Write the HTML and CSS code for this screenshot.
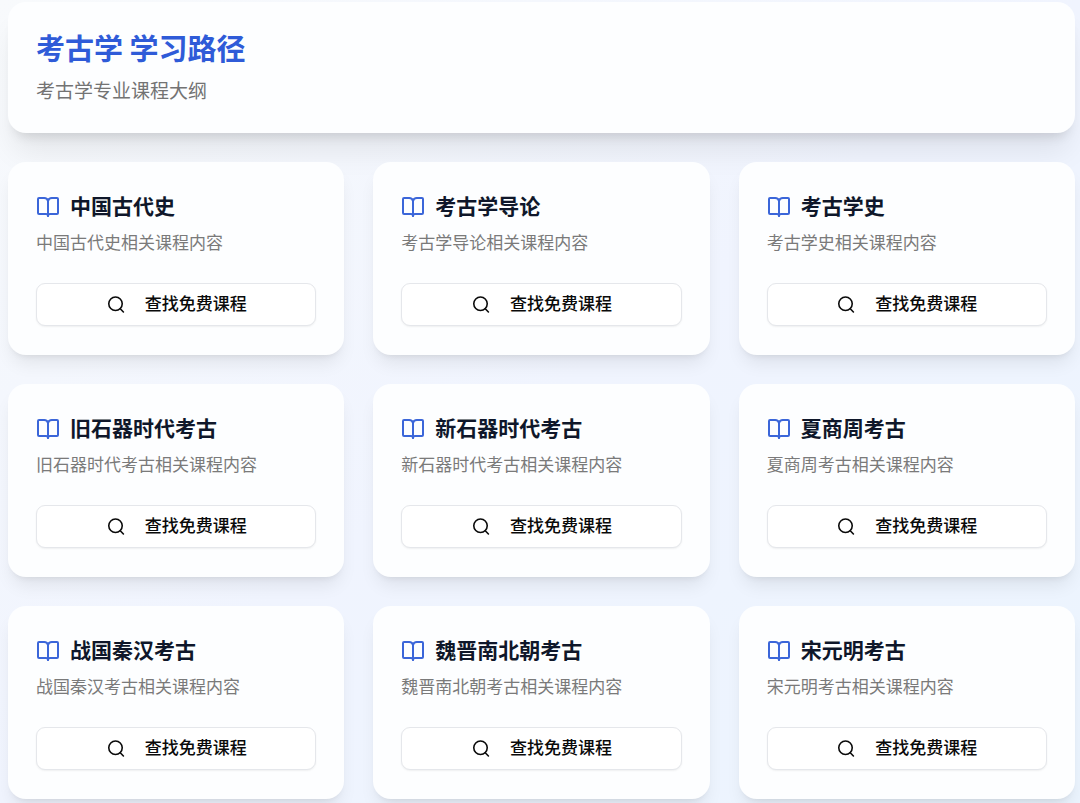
FILE: index.html
```html
<!DOCTYPE html>
<html lang="zh-CN">
<head>
<meta charset="utf-8">
<meta name="viewport" content="width=device-width, initial-scale=1">
<title>考古学 学习路径</title>
<link rel="stylesheet" href="styles.css">
</head>
<body>
<svg class="sprite" aria-hidden="true">
  <symbol id="book" viewBox="0 0 24 24"><path d="M12 6v15"/><path d="M3 19a1 1 0 0 1-1-1V4a1 1 0 0 1 1-1h5a4 4 0 0 1 4 3 4 4 0 0 1 4-3h5a1 1 0 0 1 1 1v14a1 1 0 0 1-1 1h-7a2 2 0 0 0-2 2 2 2 0 0 0-2-2z"/></symbol>
  <symbol id="search" viewBox="0 0 24 24"><circle cx="12" cy="11" r="8.5"/><path d="m22 21.500-4-4.200"/></symbol>
</svg>
<main class="page">
  <header class="card hero">
    <h1 class="hero-title">考古学 学习路径</h1>
    <p class="hero-text">考古学专业课程大纲</p>
  </header>
  <section class="grid">
    <article class="card">
      <h2 class="card-title"><svg class="icon-book"><use href="#book"/></svg>中国古代史</h2>
      <p class="card-text">中国古代史相关课程内容</p>
      <button class="find" type="button"><svg class="icon-search"><use href="#search"/></svg>查找免费课程</button>
    </article>
    <article class="card">
      <h2 class="card-title"><svg class="icon-book"><use href="#book"/></svg>考古学导论</h2>
      <p class="card-text">考古学导论相关课程内容</p>
      <button class="find" type="button"><svg class="icon-search"><use href="#search"/></svg>查找免费课程</button>
    </article>
    <article class="card">
      <h2 class="card-title"><svg class="icon-book"><use href="#book"/></svg>考古学史</h2>
      <p class="card-text">考古学史相关课程内容</p>
      <button class="find" type="button"><svg class="icon-search"><use href="#search"/></svg>查找免费课程</button>
    </article>
    <article class="card">
      <h2 class="card-title"><svg class="icon-book"><use href="#book"/></svg>旧石器时代考古</h2>
      <p class="card-text">旧石器时代考古相关课程内容</p>
      <button class="find" type="button"><svg class="icon-search"><use href="#search"/></svg>查找免费课程</button>
    </article>
    <article class="card">
      <h2 class="card-title"><svg class="icon-book"><use href="#book"/></svg>新石器时代考古</h2>
      <p class="card-text">新石器时代考古相关课程内容</p>
      <button class="find" type="button"><svg class="icon-search"><use href="#search"/></svg>查找免费课程</button>
    </article>
    <article class="card">
      <h2 class="card-title"><svg class="icon-book"><use href="#book"/></svg>夏商周考古</h2>
      <p class="card-text">夏商周考古相关课程内容</p>
      <button class="find" type="button"><svg class="icon-search"><use href="#search"/></svg>查找免费课程</button>
    </article>
    <article class="card">
      <h2 class="card-title"><svg class="icon-book"><use href="#book"/></svg>战国秦汉考古</h2>
      <p class="card-text">战国秦汉考古相关课程内容</p>
      <button class="find" type="button"><svg class="icon-search"><use href="#search"/></svg>查找免费课程</button>
    </article>
    <article class="card">
      <h2 class="card-title"><svg class="icon-book"><use href="#book"/></svg>魏晋南北朝考古</h2>
      <p class="card-text">魏晋南北朝考古相关课程内容</p>
      <button class="find" type="button"><svg class="icon-search"><use href="#search"/></svg>查找免费课程</button>
    </article>
    <article class="card">
      <h2 class="card-title"><svg class="icon-book"><use href="#book"/></svg>宋元明考古</h2>
      <p class="card-text">宋元明考古相关课程内容</p>
      <button class="find" type="button"><svg class="icon-search"><use href="#search"/></svg>查找免费课程</button>
    </article>
  </section>
</main>
</body>
</html>
```
FILE: styles.css
```css
* {
  box-sizing: border-box;
}

body {
  margin: 0;
  min-height: 100vh;
  background: linear-gradient(to bottom right, #f8fafc, #f0f4fe 50%, #ebf4fe);
  color: #0f172a;
  font-family: "Liberation Sans", "Noto Sans CJK SC", sans-serif;
}

h1, h2, p {
  margin: 0;
}

.sprite {
  display: none;
}

.page {
  display: flex;
  flex-direction: column;
  gap: 29px;
  padding: 2px 5px 4px 8px;
}

.grid {
  display: grid;
  grid-template-columns: repeat(3, minmax(0, 1fr));
  gap: 29px;
}

.card {
  display: flex;
  flex-direction: column;
  padding: 29px 28px;
  border-radius: 18px;
  background: #fdfeff;
  box-shadow: 0 12px 18px -4px rgb(0 0 0 / 8%), 0 5px 7px -5px rgb(0 0 0 / 10%);
}

.hero {
  gap: 12px;
  box-shadow: 0 24px 30px -6px rgb(0 0 0 / 8%), 0 10px 12px -7px rgb(0 0 0 / 12%);
  font-family: "Noto Sans CJK SC", sans-serif;
}

.hero-title {
  color: #2f5bd8;
  font-size: 29px;
  font-weight: 700;
  line-height: 33px;
}

.hero-text {
  color: #737373;
  font-size: 19px;
  line-height: 28px;
}

.card-title {
  display: flex;
  align-items: center;
  gap: 10px;
  font-size: 21px;
  font-weight: 700;
  line-height: 32px;
}

.card-text {
  margin-top: 9px;
  color: #7a7a7a;
  font-size: 17px;
  line-height: 24px;
}

.find {
  display: flex;
  align-items: center;
  justify-content: center;
  gap: 20px;
  height: 43px;
  margin-top: 27px;
  padding: 0 16px;
  border: 1px solid #e5e7eb;
  border-radius: 9px;
  background: #fff;
  box-shadow: 0 1px 2px rgb(0 0 0 / 6%);
  color: #0a0a0a;
  font-family: inherit;
  font-size: 17px;
  font-weight: 500;
  line-height: 24px;
  cursor: pointer;
}

.icon-book,
.icon-search {
  flex: none;
  fill: none;
  stroke: currentColor;
  stroke-width: 2;
  stroke-linecap: round;
  stroke-linejoin: round;
}

.icon-book {
  width: 24px;
  height: 24px;
  color: #3b66d9;
}

.icon-search {
  width: 19px;
  height: 19px;
}
```
